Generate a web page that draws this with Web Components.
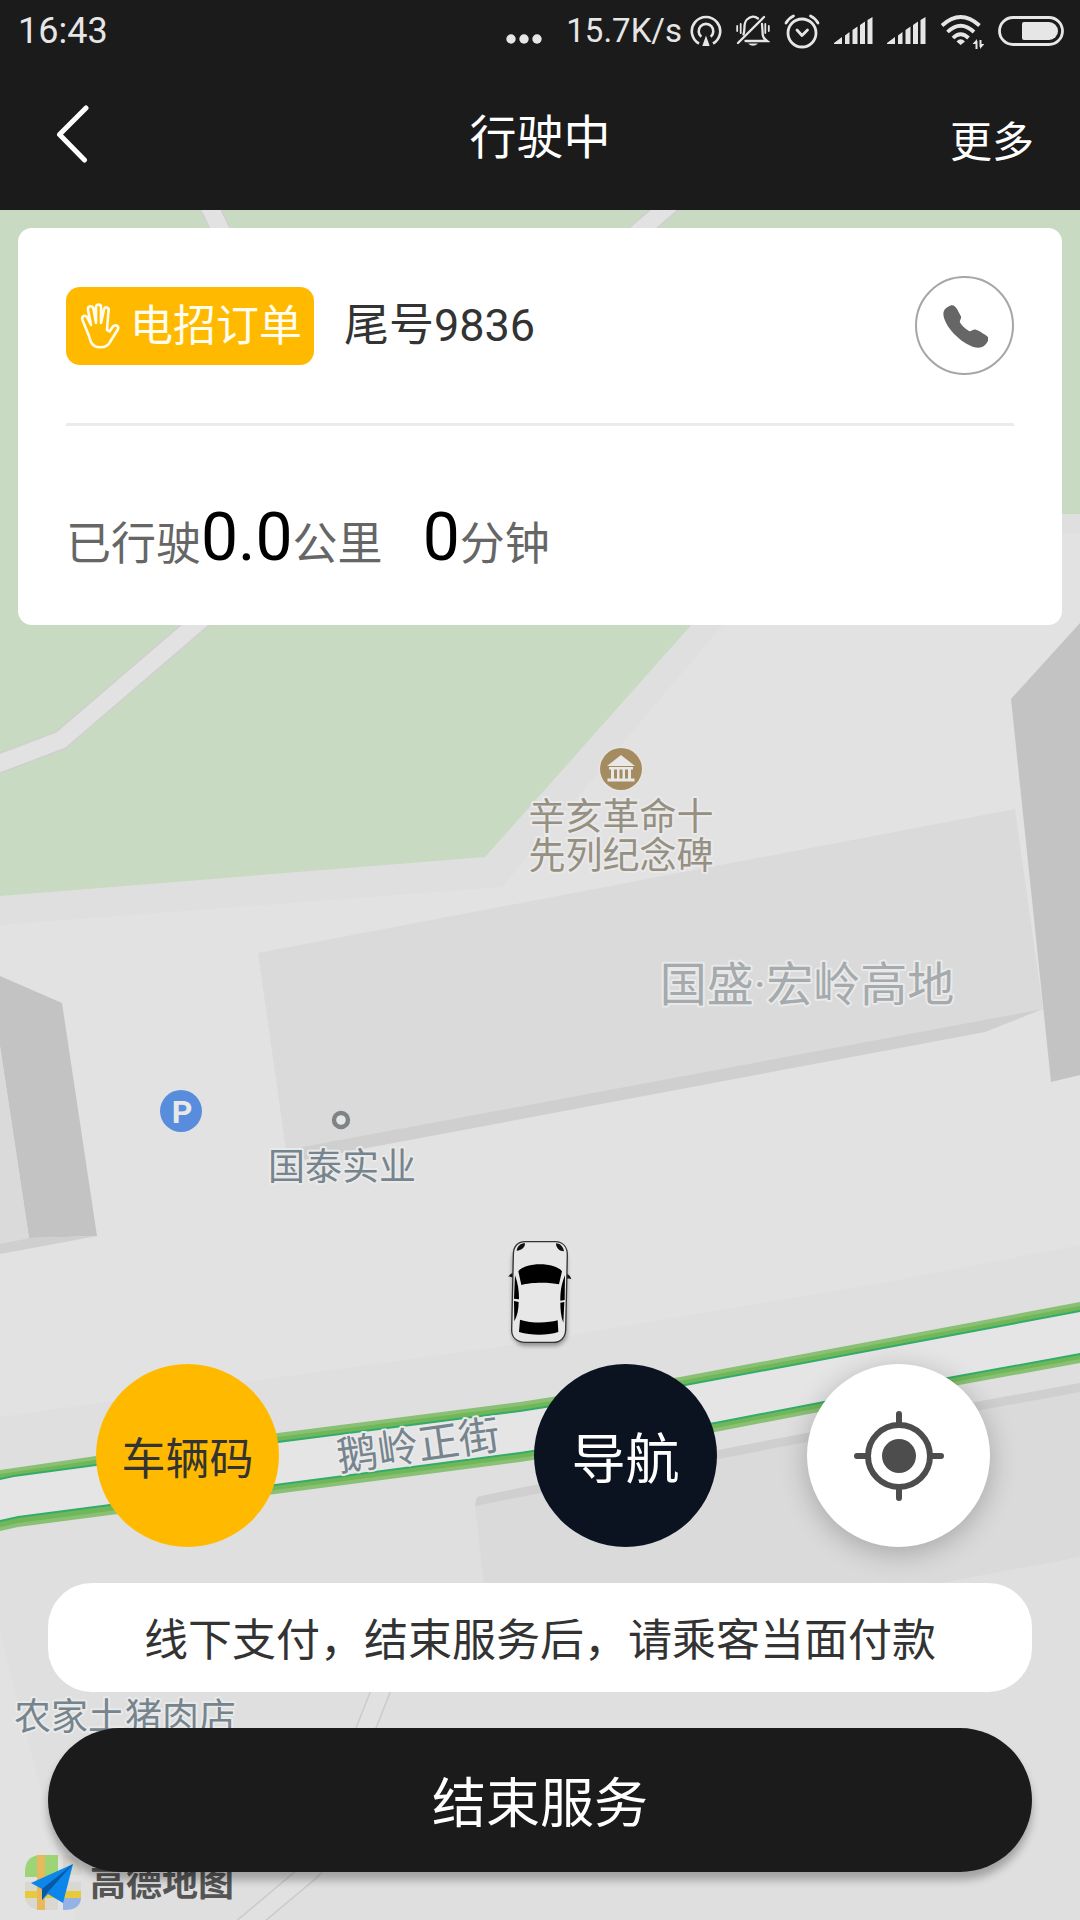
<!DOCTYPE html>
<html lang="zh-CN">
<head>
<meta charset="utf-8">
<meta name="viewport" content="width=device-width, initial-scale=1">
<title>行驶中</title>
<style>
  html, body { margin: 0; height: 100%; }
  body {
    font-family: Roboto, "Noto Sans CJK SC", sans-serif;
    background: #1b1b1b;
    --ink: #1b1b1b;
    --amber: #ffba00;
    --text: #333;
    --muted: #666;
    --label-font: "Noto Sans CJK SC", sans-serif;
  }
</style>
</head>
<body>
<driving-screen></driving-screen>
<script>
const define = (name, html) => {
  const template = document.createElement('template');
  template.innerHTML = html;
  customElements.define(name, class extends HTMLElement {
    constructor() {
      super();
      this.attachShadow({ mode: 'open' }).append(template.content.cloneNode(true));
    }
  });
};

define('signal-icon', `
<style>:host{display:block} svg{display:block}</style>
<svg width="39" height="28" viewBox="0 0 39 28" fill="#e6e6e6" aria-hidden="true">
  <path d="M0 27V26L8 20V27ZM11 27V18.500L15.500 15V27ZM18.500 27V13L23.500 9.500V27ZM26 27V8L31 4.500V27ZM33.500 27V3L38.500 0V27Z"/>
</svg>`);

define('status-bar', `
<style>
  :host { display: flex; justify-content: space-between; align-items: center; box-sizing: border-box;
    height: 60px; padding: 2px 16px 0 18px; background: var(--ink); color: #e6e6e6; }
  time { font-size: 36px; line-height: 40px; }
  .icons { display: flex; align-items: center; gap: 14px; }
  .net { display: flex; align-items: center; gap: 8px; }
  .rate { font-size: 33px; line-height: 40px; padding-left: 10px; }
  svg { display: block; }
</style>
<time>16:43</time>
<div class="icons">
  <svg width="36" height="28" viewBox="0 0 36 28" fill="#e6e6e6" aria-hidden="true"><circle cx="5" cy="22" r="4.700"/><circle cx="18" cy="22" r="4.700"/><circle cx="31" cy="22" r="4.700"/></svg>
  <div class="net">
    <span class="rate">15.7K/s</span>
    <svg width="32" height="32" viewBox="0 0 32 32" fill="none" stroke="#e6e6e6" stroke-width="2.600" aria-hidden="true">
      <path d="M9 28.500A14.200 14.200 0 1 1 23 28.500"/><path d="M11.300 21.800A7.300 7.300 0 1 1 20.700 21.800"/>
      <path d="M16 20.500L12.300 31H19.700Z" fill="#e6e6e6" stroke="none"/>
    </svg>
  </div>
  <svg width="34" height="34" viewBox="0 0 34 34" fill="none" stroke="#e6e6e6" stroke-width="2.300" stroke-linecap="round" aria-hidden="true">
    <path d="M2 29L28 3"/><path d="M7.500 20.500C9.500 14 7 9 11 5.500C14.500 2 19 2 22 4.500"/>
    <path d="M9.500 27H31C27 24 26.500 22 26.500 17L26 10"/>
    <path d="M12 29.500H22Q17 34 12 29.500Z" fill="#e6e6e6" stroke="none"/>
    <path d="M1.200 12V17M4.700 10V19M29.300 10V19M32.800 12V17" stroke-width="1.800"/>
  </svg>
  <svg width="36" height="36" viewBox="0 0 36 36" fill="none" stroke="#e6e6e6" stroke-width="2.800" stroke-linecap="round" stroke-linejoin="round" aria-hidden="true">
    <circle cx="18" cy="20" r="14"/><path d="M13 17L18 22.500L23.500 17M2 10Q5 5 9.500 3M34 10Q31 5 26.500 3"/>
  </svg>
  <signal-icon></signal-icon>
  <signal-icon></signal-icon>
  <svg width="44" height="36" viewBox="0 0 44 36" fill="none" stroke="#e6e6e6" stroke-width="3.800" aria-hidden="true">
    <path d="M2 12.500Q20.600 -4.500 39.500 12.500M7.500 19Q20.600 6.500 34 19M13 25Q20.600 17.500 28.500 25"/>
    <path d="M16.500 28.500Q20.600 24 25 28.500L20.600 32Z" fill="#e6e6e6" stroke="none"/>
    <path d="M36.500 36V28M40.500 27V34" stroke-width="2"/><path d="M32.500 31L37 26V31ZM40 31H44.500L40 36Z" fill="#e6e6e6" stroke="none"/>
  </svg>
  <svg width="66" height="30" viewBox="0 0 66 30" aria-hidden="true">
    <rect x="1.500" y="1.500" width="63" height="27" rx="13.500" fill="none" stroke="#e6e6e6" stroke-width="2.800"/>
    <path d="M26 6H51A9 9 0 0 1 51 24H26Q24 24 24 22V8Q24 6 26 6Z" fill="#e6e6e6"/>
  </svg>
</div>`);

define('nav-bar', `
<style>
  :host { display: grid; grid-template-columns: 1fr auto 1fr; align-content: center; align-items: end;
    box-sizing: border-box; height: 150px; padding: 0 46px; background: var(--ink); color: #fff; }
  button { font: inherit; color: inherit; background: none; border: 0; padding: 0; }
  .back { justify-self: start; width: 60px; height: 60px; }
  .more { justify-self: end; font-size: 42px; line-height: 44px; }
  h1 { margin: 0; font-size: 47px; font-weight: 400; line-height: 54px; }
  svg { display: block; }
</style>
<button class="back" aria-label="返回"><svg width="60" height="60" viewBox="0 0 60 60" fill="none" stroke="#fff" stroke-width="5" stroke-linecap="round" stroke-linejoin="round"><path d="M40 3L13.500 29.500L38.500 55"/></svg></button>
<h1><slot></slot></h1>
<button class="more"><slot name="more"></slot></button>`);

define('map-canvas', `
<style>
  :host { display: block; overflow: hidden; background: #dfdfdf; }
  svg { display: block; width: 100%; height: 100%; }
  text { font-family: Roboto, "Noto Sans CJK SC", sans-serif; font-size: 37px; text-anchor: middle;
    stroke: #e9e9e9; stroke-width: 4px; stroke-linejoin: round; paint-order: stroke; }
  .shop { fill: #76848e; }
  .sight { fill: #959081; }
  .estate { fill: #a5aaad; font-size: 47px; }
  .street { fill: #76848e; font-size: 41px; }
  .brand { fill: #555; font-size: 36px; font-weight: 700; stroke: none; }
  .parking { fill: #e8e8e8; font-size: 32px; font-weight: 700; stroke: none; }
</style>
<svg viewBox="0 210 1080 1710" preserveAspectRatio="xMidYMin slice" role="img" aria-label="地图">
  <!-- ground, park and the lane along it -->
  <rect y="210" width="1080" height="1710" fill="#e3e2e2"/>
  <path d="M0 210H1080V534H800L659 700L502 887L0 925Z" fill="#dfdfdf"/>
  <path d="M0 210H1080V514H790L485 857L0 896Z" fill="#c8dac2"/>
  <g fill="none" stroke-linejoin="round">
    <path d="M-10 767L61 740L195 625L300 535M196 180L211 210L240 270M690 187L664 210L600 265" stroke="#cfcfcf" stroke-width="20"/>
    <path d="M-10 767L61 740L195 625L300 535M196 180L211 210L240 270M690 187L664 210L600 265" stroke="#e3e2e2" stroke-width="17"/>
  </g>
  <!-- buildings -->
  <path d="M258 953L1015 809L1043 1009L286 1150Z" fill="#dadadb"/>
  <path d="M302 1147L1043 1009L985 1032L303 1160Z" fill="#cfcfcf"/>
  <path d="M1011 699L1080 623V1075L1051 1082Z" fill="#c3c3c3"/>
  <path d="M0 976L62 1003L97 1236L29 1238L0 1046Z" fill="#c3c3c3"/>
  <path d="M0 1046L29 1238L0 1244Z" fill="#dadadb"/>
  <path d="M0 1244L29 1238L97 1236L0 1254Z" fill="#cfcfcf"/>
  <!-- main street -->
  <path d="M0 1417L260 1380L511 1345L573 1335L898 1280L1080 1245V1920H0Z" fill="#dfdfdf"/>
  <path d="M0 1634L76 1920H0Z" fill="#e3e2e2"/>
  <path d="M477 1497L520 1488L807 1433L1080 1383V1557L930 1585L700 1640H490L475 1506Z" fill="#dadadb"/>
  <path d="M475 1506L477 1497L520 1488L807 1433L1080 1383V1392L807 1442L520 1497Z" fill="#cfcfcf"/>
  <path d="M0 1470L14 1468L96 1456L278 1433L520 1402L680 1377L1080 1302V1363L948 1387L715 1432L520 1462L275 1494L110 1515L18 1527L0 1531Z" fill="#8ac074"/>
  <path d="M0 1474L14 1472L96 1460L278 1437L520 1406L680 1381L1080 1306V1359L948 1383L715 1428L520 1458L275 1490L110 1511L18 1523L0 1527Z" fill="#6fb758"/>
  <path d="M0 1478L14 1475L96 1464L278 1441L520 1410L680 1385L1080 1310V1355L948 1379L715 1424L520 1454L275 1486L110 1506L18 1518L0 1522Z" fill="#33ab6c"/>
  <path d="M0 1480L14 1477L96 1466L278 1443L520 1412L680 1387L1080 1312V1353L948 1377L715 1422L520 1452L275 1484L110 1504L18 1516L0 1520Z" fill="#e5e5e6"/>
  <!-- footpath -->
  <g fill="none" stroke-linejoin="round">
    <path d="M385 1680L366 1728L320 1861L309 1872L252 1920L240 1930" stroke="#cbcbcb" stroke-width="20"/>
    <path d="M385 1680L366 1728L320 1861L309 1872L252 1920L240 1930" stroke="#e2e1e1" stroke-width="17"/>
  </g>
  <!-- pins -->
  <circle cx="621" cy="769" r="22.500" fill="#e6e5e3"/><circle cx="621" cy="769" r="21" fill="#a48c60"/>
  <path d="M621 755L635 766H607ZM609 767H633V769.500H609ZM611 769H614V779H611ZM617 769H619.500V779H617ZM622.500 769H625V779H622.500ZM628 769H631V779H628ZM607.500 778.500H634.500V781.500H607.500Z" fill="#e8e8e8"/>
  <circle cx="181" cy="1111" r="21" fill="#588ddd"/>
  <circle cx="341" cy="1120" r="7" fill="#e6e6e6" stroke="#7e8485" stroke-width="4.400"/>
  <text class="parking" x="182" y="1123">P</text>
  <text class="sight" x="621" y="830">辛亥革命十</text>
  <text class="sight" x="621" y="869">先列纪念碑</text>
  <text class="estate" x="807" y="1001">国盛·宏岭高地</text>
  <text class="shop" x="342" y="1180">国泰实业</text>
  <text class="street" x="418" y="1460" transform="rotate(-8 418 1444)">鹅岭正街</text>
  <text class="shop" x="125" y="1730">农家土猪肉店</text>
  <!-- car -->
  <defs><filter id="soft" x="-20%" y="-20%" width="140%" height="140%"><feGaussianBlur stdDeviation="6"/></filter></defs>
  <g transform="translate(460 1220) scale(.33333)">
    <rect x="157" y="80" width="164" height="298" rx="40" fill="#000" opacity=".35" filter="url(#soft)"/>
    <path d="M160 174C150 170 146 168 144 172C148 164 154 158 161 160ZM321 162C328 164 332 170 334 178C328 174 324 176 320 176Z" fill="#111"/>
    <path d="M195 65H287C310 66 322 82 322 105L317 330C316 352 302 367 280 367H196C170 366 155 352 155 330L160 105C160 80 172 66 195 65Z" fill="#e8e7e7" stroke="#333" stroke-width="4"/>
    <path d="M170 92C172 78 182 70 195 70C196 82 184 92 170 92ZM312 94C310 80 300 70 288 70C288 84 298 94 312 94Z" fill="#111"/>
    <path d="M175 154C196 126 284 126 306 154L297 193C270 186 212 186 184 195ZM180 299C214 310 262 310 293 301L295 336C260 347 216 347 177 336Z" fill="#000"/>
    <path d="M165 166C174 190 177 212 177 238L162 236ZM162 243L176 246C176 268 172 288 163 304ZM315 166C305 190 301 212 301 242L314 240ZM301 248L313 246L310 308C303 290 301 268 301 248Z" fill="#000"/>
  </g>
  <!-- map provider mark -->
  <g>
    <path d="M25 1877V1872Q25 1855 42 1855H58V1877Z" fill="#9dd475"/>
    <path d="M63 1855Q81 1855 81 1873V1875H63ZM25 1882H81V1891H25ZM25 1898H58V1910H43Q27 1910 25 1898Z" fill="#d8d7d0"/>
    <path d="M25 1891H81V1898H25Z" fill="#e8c93c"/>
    <path d="M63 1898H81Q80 1910 65 1910H63Z" fill="#94b2e4"/>
    <path d="M37 1855H45V1910H37Z" fill="#e8b95c"/>
    <path d="M73 1864L31 1883L42 1889V1900L48 1894L63 1903Z" fill="#0c86e8"/>
    <path d="M73 1864L42 1889V1900L47 1893Z" fill="#0759a8"/>
  </g>
  <text class="brand" x="162" y="1896">高德地图</text>
</svg>`);

define('order-badge', `
<style>
  :host { display: inline-flex; align-items: center; gap: 10px; box-sizing: border-box; height: 78px;
    padding: 0 12px 0 14px; border-radius: 14px; background: var(--amber); color: #fffdf0;
    font-size: 43px; line-height: 48px; white-space: nowrap; }
  svg { display: block; }
</style>
<svg width="40" height="46" viewBox="0 0 40 46" fill="none" stroke="#fffdf0" stroke-width="2.600" stroke-linejoin="round" aria-hidden="true">
  <path d="M9 33L2.500 17C1 13 6 11 7.500 15L11 22L8 7C7.500 2.500 12.500 2 13.500 6L16 20V4C16 .8 21 .8 21 4V20L24 6.500C25 3 29.500 4 28.500 8L27 27L29.500 28.500L33 23.500C35.500 21 40 23 37.500 27L30 39C27 45.500 14 47 10.500 38Z"/>
</svg>
<slot></slot>`);

define('trip-stat', `
<style>
  :host { display: block; font-size: 45px; line-height: 66px; color: var(--muted); white-space: nowrap; }
  ::slotted(b) { font-size: 66px; line-height: 50px; font-weight: 400; color: #000; }
</style>
<slot></slot>`);

define('order-card', `
<style>
  :host { display: block; padding: 48px 48px 47px; border-radius: 14px; background: #fff; color: var(--text); }
  .head { display: flex; align-items: center; gap: 30px; padding-bottom: 48px; border-bottom: 3px solid #ebebeb; }
  .tail { flex: 1; font-size: 45px; line-height: 48px; }
  button { display: grid; place-items: center; width: 99px; height: 99px; padding: 0; border: 2px solid #a6a6a6;
    border-radius: 50%; background: #fff; }
  .trip { display: flex; gap: 40px; padding-top: 86px; }
</style>
<div class="head">
  <slot name="badge"></slot>
  <div class="tail"><slot name="tail"></slot></div>
  <button aria-label="拨打电话"><svg width="46" height="44" viewBox="-1 -1 46 44" fill="#666"><path d="M1 13C-1 6 2 3 7 .8C10 -.5 12 1 14 4L17.500 10.500C19.500 14 16 14.500 17 17.500C19 21 22.500 24 26 26C29 27 29.500 24 33 24.700C36 25.500 41 29 44 31C47 34 44.500 37 42.500 39.500C39 43.500 33 43.500 28 41C16 36 4 23 1 13Z"/></svg></button>
</div>
<div class="trip"><slot></slot></div>`);

define('round-button', `
<style>
  :host { display: block; }
  button { display: grid; place-items: center; width: 183px; height: 183px; padding: 0; border: 0; border-radius: 50%;
    font-family: var(--label-font); font-size: var(--size, 44px); line-height: 60px; white-space: nowrap;
    color: var(--fg, var(--text)); background: var(--bg, #fff); box-shadow: var(--shadow, none); }
</style>
<button><slot></slot></button>`);

define('notice-pill', `
<style>
  :host { display: block; box-sizing: border-box; padding: 26px 16px; border-radius: 44px; background: #fff;
    color: var(--text); font-family: var(--label-font); font-size: 44px; line-height: 57px; text-align: center; }
</style>
<slot></slot>`);

define('primary-button', `
<style>
  :host { display: block; }
  button { display: block; width: 100%; padding: 42px 0; border: 0; border-radius: 72px; font-family: var(--label-font); font-size: 54px;
    line-height: 60px; color: #fff; background: var(--ink); box-shadow: 0 8px 8px rgba(0,0,0,.28); }
</style>
<button><slot></slot></button>`);

define('driving-screen', `
<style>
  :host { display: flex; flex-direction: column; min-height: 100vh; }
  main { position: relative; flex: 1; display: flex; flex-direction: column; }
  map-canvas { position: absolute; inset: 0; }
  .over { position: relative; flex: 1; display: flex; flex-direction: column; justify-content: space-between; gap: 48px; padding: 18px 18px 48px; }
  .bottom { display: flex; flex-direction: column; gap: 36px; padding: 0 30px; }
  .tools { display: flex; justify-content: space-between; padding: 0 42px 0 48px; }
  .pair { display: flex; gap: 90px; }
  .code { --bg: var(--amber); }
  .navi { --bg: #0b1321; --fg: #fff; --size: 54px; }
  .locate { --shadow: 0 6px 28px rgba(0,0,0,.24); }
  svg { display: block; }
</style>
<status-bar></status-bar>
<nav-bar>行驶中<span slot="more">更多</span></nav-bar>
<main>
  <map-canvas></map-canvas>
  <div class="over">
    <order-card>
      <order-badge slot="badge">电招订单</order-badge>
      <span slot="tail">尾号9836</span>
      <trip-stat>已行驶<b>0.0</b>公里</trip-stat>
      <trip-stat><b>0</b>分钟</trip-stat>
    </order-card>
    <div class="bottom">
      <div class="tools">
        <round-button class="code">车辆码</round-button>
        <div class="pair">
          <round-button class="navi">导航</round-button>
          <round-button class="locate"><svg width="92" height="92" viewBox="0 0 92 92" fill="none" stroke="#4d4d4d" stroke-width="6" stroke-linecap="round" role="img" aria-label="定位"><circle cx="46" cy="46" r="31"/><circle cx="46" cy="46" r="17" fill="#4d4d4d" stroke="none"/><path d="M46 4V14M46 78V88M4 46H14M78 46H88"/></svg></round-button>
        </div>
      </div>
      <notice-pill>线下支付，结束服务后，请乘客当面付款</notice-pill>
      <primary-button>结束服务</primary-button>
    </div>
  </div>
</main>`);
</script>
</body>
</html>
